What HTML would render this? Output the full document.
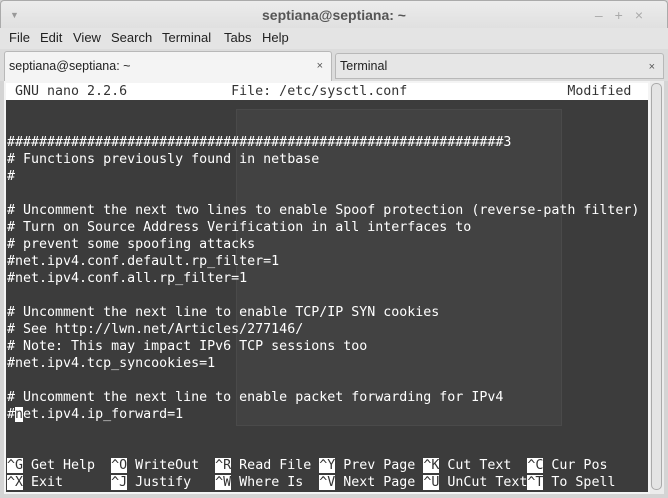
<!DOCTYPE html>
<html><head><style>
*{margin:0;padding:0;box-sizing:border-box}
body{width:668px;height:498px;background:#d4d4d4;font-family:"Liberation Sans",sans-serif;position:relative;overflow:hidden}
.title{position:absolute;left:0;top:0;width:668px;height:28px;background:linear-gradient(#ececec,#e0e0e0);border:1px solid #aaa;border-bottom:none;border-radius:4px 4px 0 0;text-align:center;font-size:14px;font-weight:bold;color:#555;line-height:28px}
.menu{position:absolute;left:0;top:28px;width:668px;height:21px;background:#e4e4e4;font-size:13px;color:#222}
.menu span{position:absolute;top:2px}
.tabs{position:absolute;left:0;top:49px;width:668px;height:32px;background:#dcdcdc}
.tab1{position:absolute;left:4px;top:2px;width:328px;height:30px;background:#f4f4f4;border:1px solid #b8b8b8;border-bottom:none;border-radius:3px 3px 0 0;font-size:12.5px;color:#222;padding:7px 4px}
.tab2{position:absolute;left:335px;top:4px;width:329px;height:26px;background:#e6e6e6;border:1px solid #b8b8b8;border-radius:3px 3px 0 0;font-size:12.5px;color:#222;padding:5px 4px}
.x{position:absolute;right:8px;font-size:11px;color:#555}
.term{position:absolute;left:4px;top:81px;width:646px;height:413px;background:#3c3c3c;border:2px solid #f4f4f4}
.ghost{position:absolute;left:230px;top:26px;width:326px;height:317px;background:#424242;border:1px solid #4a4a4a}
.sb{position:absolute;left:650px;top:81px;width:14px;height:413px;background:#ececec}
.sb div{position:absolute;left:1px;top:2px;width:11px;height:407px;border:1px solid #aaa;border-radius:5px;background:#e4e4e4}
pre{position:absolute;left:1px;top:0;font-family:"DejaVu Sans Mono","Liberation Mono",monospace;font-size:13.3px;line-height:17px;color:#fff;white-space:pre}
.hdr{position:absolute;left:0;top:0;width:642px;height:17px;background:#fff}
.hdr pre{color:#333}
.k{background:#fff;color:#333}
</style></head><body>
<div class="title"><span style="position:absolute;left:9px;font-size:9px;color:#999;font-weight:normal">▼</span>septiana@septiana: ~<span style="position:absolute;right:12px;font-weight:normal;color:#aaa;font-size:14px;letter-spacing:12px">–+×</span></div>
<div class="menu"><span style="left:9px">File</span><span style="left:40px">Edit</span><span style="left:73px">View</span><span style="left:111px">Search</span><span style="left:162px">Terminal</span><span style="left:224px">Tabs</span><span style="left:262px">Help</span></div>
<div class="tabs">
<div class="tab1">septiana@septiana: ~<span class="x" style="top:8px">×</span></div>
<div class="tab2">Terminal<span class="x" style="top:7px">×</span></div>
</div>
<div class="term">
<div class="ghost"></div>
<div class="hdr"><pre> GNU nano 2.2.6             File: /etc/sysctl.conf                    Modified</pre></div>
<pre style="top:17px">


##############################################################3
# Functions previously found in netbase
#

# Uncomment the next two lines to enable Spoof protection (reverse-path filter)
# Turn on Source Address Verification in all interfaces to
# prevent some spoofing attacks
#net.ipv4.conf.default.rp_filter=1
#net.ipv4.conf.all.rp_filter=1

# Uncomment the next line to enable TCP/IP SYN cookies
# See http://lwn.net/Articles/277146/
# Note: This may impact IPv6 TCP sessions too
#net.ipv4.tcp_syncookies=1

# Uncomment the next line to enable packet forwarding for IPv4
#<span class="k">n</span>et.ipv4.ip_forward=1


<span class="k">^G</span> Get Help  <span class="k">^O</span> WriteOut  <span class="k">^R</span> Read File <span class="k">^Y</span> Prev Page <span class="k">^K</span> Cut Text  <span class="k">^C</span> Cur Pos
<span class="k">^X</span> Exit      <span class="k">^J</span> Justify   <span class="k">^W</span> Where Is  <span class="k">^V</span> Next Page <span class="k">^U</span> UnCut Text<span class="k">^T</span> To Spell</pre>
</div>
<div class="sb"><div></div></div>
</body></html>
